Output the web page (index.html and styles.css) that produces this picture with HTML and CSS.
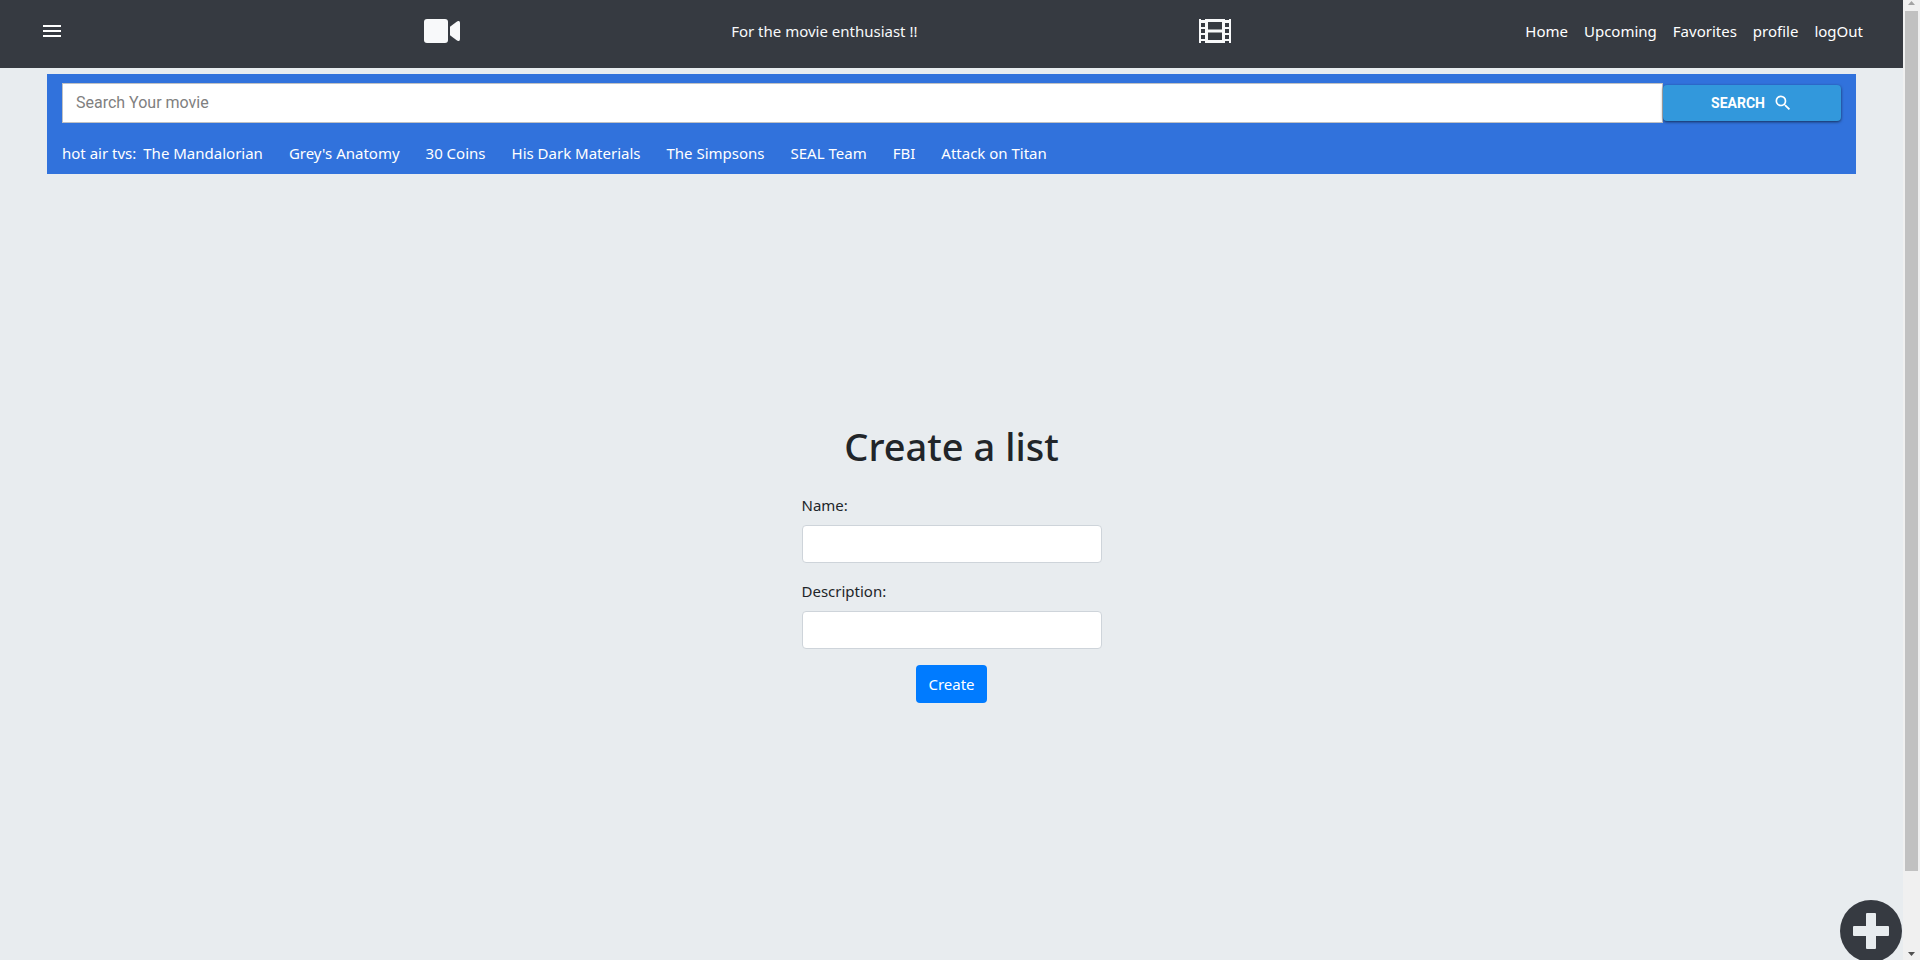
FILE: index.html
```html
<!DOCTYPE html>
<html lang="en">
<head>
<meta charset="utf-8">
<title>Create a list</title>
<link rel="stylesheet" href="styles.css">
</head>
<body>
<div class="window">
  <div class="page">
    <header class="navbar">
      <button class="menu-button" type="button" aria-label="Menu">
        <svg width="24" height="24" viewBox="0 0 24 24" fill="currentColor"><path d="M3 18h18v-2H3v2zm0-5h18v-2H3v2zm0-7v2h18V6H3z"/></svg>
      </button>
      <svg class="nav-icon" width="36" height="24" viewBox="0 0 36 24" fill="currentColor"><rect width="24" height="24" rx="3"/><path d="M26 7.800 32.300 2.900Q34 1.600 35 2q1 .4 1 2v16q0 1.600-1 2t-2.700-.9L26 16.200z"/></svg>
      <p class="tagline">For the movie enthusiast !!</p>
      <svg class="nav-icon" width="32" height="24" viewBox="0 0 32 24" fill="currentColor"><path fill-rule="evenodd" d="M0 0h2v1h4V0h20v1h4V0h2v24h-2v-2h-4v2H6v-2H2v2H0zM2 4v4h4V4zm0 6v4h4v-4zm0 6v4h4v-4zM26 4v4h4V4zm0 6v4h4v-4zm0 6v4h4v-4zM9 3v7.500h14V3zm0 10.500V21h14v-7.500z"/></svg>
      <nav class="nav-links">
        <a href="#">Home</a>
        <a href="#">Upcoming</a>
        <a href="#">Favorites</a>
        <a href="#">profile</a>
        <a href="#">logOut</a>
      </nav>
    </header>
    <section class="search-panel">
      <form class="search-form">
        <input class="search-input" type="text" placeholder="Search Your movie" aria-label="Search Your movie">
        <button class="search-button" type="button">SEARCH
          <svg width="20" height="20" viewBox="0 0 24 24" fill="currentColor"><path d="M15.500 14h-.79l-.28-.27A6.470 6.470 0 0 0 16 9.500 6.500 6.500 0 1 0 9.500 16c1.610 0 3.090-.59 4.230-1.570l.27.28v.79l5 4.990L20.490 19l-4.990-5zm-6 0C7.010 14 5 11.990 5 9.500S7.010 5 9.500 5 14 7.010 14 9.500 11.990 14 9.500 14z"/></svg>
        </button>
      </form>
      <div class="trending">
        <span class="trending-label">hot air tvs:</span>
        <a href="#">The Mandalorian</a>
        <a href="#">Grey's Anatomy</a>
        <a href="#">30 Coins</a>
        <a href="#">His Dark Materials</a>
        <a href="#">The Simpsons</a>
        <a href="#">SEAL Team</a>
        <a href="#">FBI</a>
        <a href="#">Attack on Titan</a>
      </div>
    </section>
    <main class="content">
      <form class="list-form">
        <h1>Create a list</h1>
        <label for="name">Name:</label>
        <input id="name" type="text">
        <label for="description">Description:</label>
        <input id="description" type="text">
        <button class="create-button" type="button">Create</button>
      </form>
    </main>
    <button class="add-button" type="button" aria-label="Add">
      <svg width="36" height="36" viewBox="0 0 36 36" fill="currentColor"><rect x="13" width="10" height="36" rx="1"/><rect y="13" width="36" height="10" rx="1"/></svg>
    </button>
  </div>
  <div class="scrollbar" aria-hidden="true">
    <svg width="7" height="4" viewBox="0 0 7 4" fill="#a3a3a3"><path d="M0 4 3.500 0 7 4z"/></svg>
    <div class="scroll-thumb"></div>
    <svg width="7" height="4" viewBox="0 0 7 4" fill="#505050"><path d="M0 0h7L3.500 4z"/></svg>
  </div>
</div>
</body>
</html>
```
FILE: styles.css
```css
* {
  box-sizing: border-box;
}

body {
  margin: 0;
  background: #e8ecef;
  color: #212529;
  font: 15px/24px "Noto Sans", "Open Sans", sans-serif;
}

button,
input {
  font: inherit;
}

a {
  color: inherit;
  text-decoration: none;
}

.window {
  display: flex;
  height: 100vh;
  overflow: hidden;
}

.page {
  position: relative;
  display: flex;
  flex: 1;
  flex-direction: column;
  min-width: 0;
}

.navbar {
  display: grid;
  grid-template-columns: 384fr 307fr 468fr 326fr auto;
  align-items: center;
  height: 68px;
  padding: 0 40px 6px;
  background: #363a41;
  color: #f8f9fa;
}

.menu-button {
  display: flex;
  justify-self: start;
  padding: 0;
  border: 0;
  background: none;
  color: #fff;
}

.tagline {
  margin: 0;
}

.nav-icon {
  display: block;
}

.nav-links {
  display: flex;
  gap: 16px;
  color: #fff;
}

.search-panel {
  margin: 6px 47px 0;
  padding: 9px 15px;
  background: #3172dc;
  color: #fff;
}

.search-form {
  display: flex;
  align-items: center;
  font-family: Roboto, sans-serif;
}

.search-input {
  flex: 1;
  min-width: 0;
  height: 40px;
  padding: 0 13px 2px;
  border: 1px solid #bfc1c4;
  background: #fff;
  font-size: 16px;
}

.search-input::placeholder {
  color: #808080;
}

.search-button {
  display: flex;
  flex: 0 0 10%;
  align-items: center;
  justify-content: center;
  gap: 8px;
  height: 36px;
  padding: 0;
  border: 0;
  border-radius: 4px;
  background: #3298dc;
  box-shadow: 0 1px 3px rgba(0, 0, 0, 0.6);
  color: #fff;
  font-size: 14px;
  font-weight: 700;
}

.trending {
  display: flex;
  gap: 26px;
  margin-top: 18px;
}

.trending-label {
  margin-right: -19px;
}

.content {
  display: flex;
  flex: 1;
  align-items: center;
  justify-content: center;
  padding-bottom: 9px;
}

.list-form {
  display: flex;
  flex-direction: column;
  width: 300px;
}

.list-form h1 {
  margin: 0 0 23px;
  font-size: 38px;
  font-weight: 500;
  line-height: 48px;
  text-align: center;
  white-space: nowrap;
}

.list-form label {
  margin-bottom: 8px;
}

.list-form input {
  height: 38px;
  margin-bottom: 16px;
  padding: 0 12px;
  border: 1px solid #ced4da;
  border-radius: 4px;
  background: #fff;
}

.create-button {
  align-self: center;
  height: 38px;
  padding: 0 12px;
  border: 0;
  border-radius: 4px;
  background: #007bff;
  color: #fff;
}

.add-button {
  position: absolute;
  right: 1px;
  bottom: -2px;
  display: flex;
  align-items: center;
  justify-content: center;
  width: 62px;
  height: 62px;
  padding: 0;
  border: 0;
  border-radius: 50%;
  background: #363a41;
  color: #e8ecef;
}

.scrollbar {
  display: flex;
  flex-direction: column;
  align-items: center;
  width: 17px;
  padding: 1px 0 4px;
  background: #f0f0f0;
}

.scroll-thumb {
  width: 13px;
  height: 90%;
  margin: 6px 0 auto;
  background: #c1c1c1;
}
```
